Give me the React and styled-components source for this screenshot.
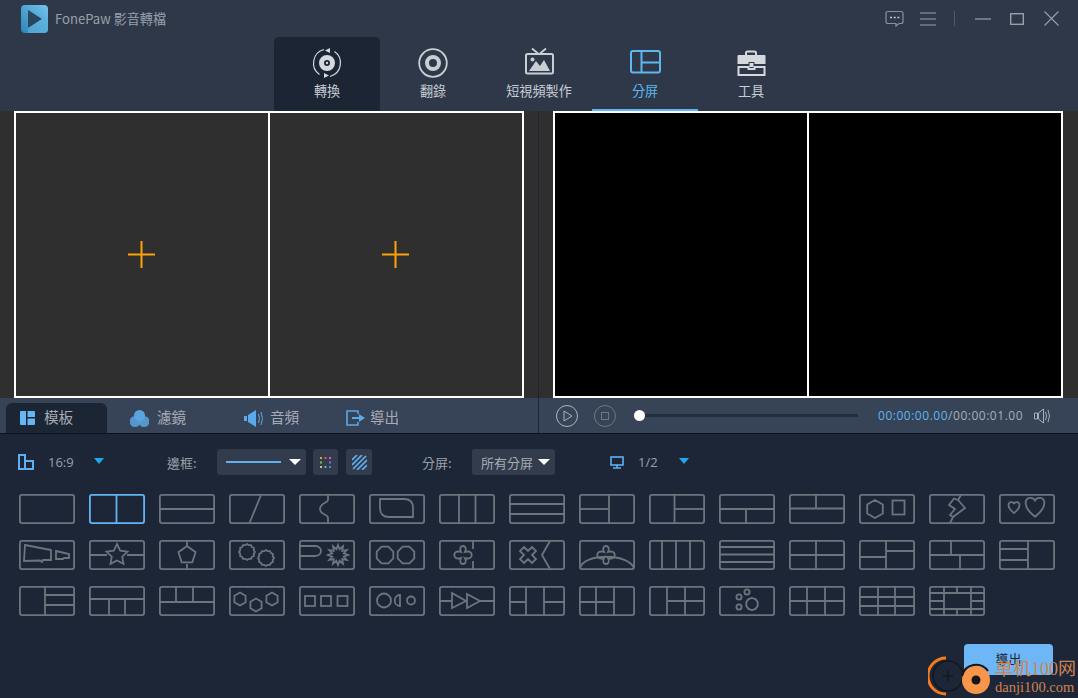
import React from 'react';
import styled, { createGlobalStyle } from 'styled-components';

const CJK = '"Noto Sans CJK TC", "Noto Sans", sans-serif';
const Global = createGlobalStyle`
  html, body { margin: 0; padding: 0; background: #1d2636; overflow: hidden; }
  * { box-sizing: border-box; }
`;

const Shell = styled.div`
  position: relative; width: 1078px; height: 698px; overflow: hidden;
  display: flex; flex-direction: column; background: #1d2636; font-family: ${CJK};
`;
const Head = styled.header`background: #2e3849; height: 111px; display: flex; flex-direction: column;`;
const TitleBar = styled.div`height: 37px; display: flex; align-items: center; padding-left: 21px;`;
const AppName = styled.span`margin-left: 7px; font-size: 13.1px; color: #98a0ab; flex: 1; line-height: 37px; margin-top: -1px;`;
const WinControls = styled.div`display: flex; align-items: center; height: 37px; padding-right: 19px; gap: 0;`;
const WinIcon = styled.svg`display: block; margin-left: ${p => p.$gap}px;`;
const Nav = styled.nav`height: 74px; display: flex; padding-left: 274px;`;
const NavTab = styled.div`
  position: relative; width: 106px; height: 74px; display: flex; flex-direction: column; align-items: center;
  padding-top: 9px; border-radius: 5px 5px 0 0;
  background: ${p => p.$dark ? '#1b2534' : 'transparent'};
  color: ${p => p.$blue ? '#5cb8ef' : '#c9ced5'};
  border-bottom: ${p => p.$blue ? '2px solid #5cb8ef' : '0'};
`;
const NavIcon = styled.svg`display: block; width: 34px; height: 34px;`;
const NavLabel = styled.span`font-size: 13.1px; line-height: 18px; margin-top: 2px; white-space: nowrap;`;

const PreviewRow = styled.section`display: flex; height: 287px;`;
const Pane = styled.div`width: ${p => p.$w}; flex: ${p => p.$w ? 'none' : 1}; padding-left: 14px; background: #2f2f2f;`;
const Rule = styled.div`width: 1px; background: #1d2433;`;
const Frame = styled.div`
  width: 510px; height: 287px; display: grid; grid-template-columns: 252px 252px; gap: 2px;
  border: 2px solid #fff; background: #fff;
`;
const Cell = styled.div`background: ${p => p.$black ? '#000' : '#2f2f2f'}; display: flex; align-items: center; justify-content: center;`;
const PlusIcon = styled.svg`display: block; margin-right: 1px; fill: none; stroke: #ffa20a; stroke-width: 2;`;

const BarRow = styled.section`display: flex; height: 36px; background: #374357; border-bottom: 1px solid #0e121a;`;
const TabsBar = styled.div`width: 538px; display: flex; padding: 5px 0 0 6px;`;
const Tab = styled.div`
  width: ${p => p.$w}px; height: 30px; display: flex; align-items: center; padding-left: ${p => p.$pad}px;
  border-radius: 6px 6px 0 0; background: ${p => p.$dark ? '#1b2534' : 'transparent'};
`;
const TabLabel = styled.span`font-size: 14.6px; line-height: 20px; margin-top: -2px; color: #a5abb5; margin-left: ${p => p.$gap}px;`;
const Player = styled.div`flex: 1; display: flex; align-items: center; padding-left: 17px;`;
const Track = styled.div`position: relative; width: 219px; height: 3px; background: #252e3c; margin-left: 23px;`;
const Knob = styled.div`position: absolute; left: -5px; top: -4px; width: 11px; height: 11px; border-radius: 50%; background: #fff;`;
const Time = styled.div`margin-left: 20px; font: 12px "Open Sans", sans-serif; letter-spacing: 0.52px; color: #a8aeb8; white-space: nowrap; width: 156px;`;
const TimeNow = styled.span`color: #5db6ee;`;

const Lower = styled.section`flex: 1; display: flex; flex-direction: column;`;
const Tools = styled.div`display: flex; align-items: center; height: 26px; margin-top: 15px; padding-left: 18px; color: #9aa0aa; font-size: 13px;`;
const ToolGroup = styled.div`width: ${p => p.$w}px; display: flex; align-items: center; flex: none;`;
const ToolText = styled.span`width: ${p => p.$w}px; flex: none; white-space: nowrap; font-family: ${p => p.$latin ? '"Open Sans", sans-serif' : 'inherit'};`;
const Arrow = styled.i`
  display: block; width: 0; height: 0; flex: none; margin-top: -3px;
  border-left: 5.5px solid transparent; border-right: 5.5px solid transparent; border-top: 6px solid #1fa8ee;
`;
const Dropdown = styled.div`
  width: ${p => p.$w}px; height: 26px; flex: none; background: #333c4c; border-radius: 3px;
  display: flex; align-items: center; justify-content: space-between; padding: 0 5px 0 ${p => p.$pad}px;
`;
const WhiteArrow = styled.i`
  display: block; width: 0; height: 0;
  border-left: 6px solid transparent; border-right: 6px solid transparent; border-top: 6px solid #fff;
`;
const Line = styled.div`width: 55px; height: 2px; background: #63b0f0;`;
const DropLabel = styled.span`color: #a5abb5; font-size: 13px;`;
const SquareBtn = styled.div`
  width: ${p => p.$w}px; height: 26px; flex: none; background: #333c4c; border-radius: 3px; margin-left: ${p => p.$gap}px;
  display: flex; align-items: center; justify-content: center;
`;
const Grid = styled.div`
  display: grid; grid-template-columns: repeat(15, 56px); grid-auto-rows: 30px; column-gap: 14px; row-gap: 16px;
  margin-top: 19px; padding-left: 19px;
`;
const Thumb = styled.svg`display: block; width: 56px; height: 30px; fill: none; stroke: ${p => p.$on ? '#63b4f5' : '#6e747e'}; stroke-width: 1.8;`;
const Footer = styled.div`display: flex; justify-content: flex-end; padding-right: 25px; margin-top: 28px;`;
const ExportBtn = styled.div`
  width: 89px; height: 31px; border-radius: 4px; background: #6db7f6; color: #1d2636; font-size: 13px; padding-bottom: 2px;
  display: flex; align-items: center; justify-content: center;
`;
const Watermark = styled.div`position: absolute; left: 928px; top: 654px; width: 150px; height: 44px; pointer-events: none;`;
const WmLogo = styled.svg`position: absolute; left: 0; top: 0; display: block;`;
const WmCn = styled.span`
  position: absolute; left: 67px; top: 3px; font: 18px "Liberation Serif", "Noto Sans CJK SC", serif; color: #cf8350; white-space: nowrap; line-height: 24px;
`;
const WmEn = styled.span`
  position: absolute; left: 67px; top: 24px; font: 14.5px "Liberation Serif", serif; color: #cf8350; white-space: nowrap; line-height: 18px;
`;

const poly = (cx, cy, r, n, rot = -90, r2) => {
  const pts = [];
  const count = r2 ? n * 2 : n;
  for (let i = 0; i < count; i++) {
    const a = ((rot + (360 / count) * i) * Math.PI) / 180;
    const rad = r2 && i % 2 ? r2 : r;
    pts.push(`${(cx + rad * Math.cos(a)).toFixed(1)},${(cy + rad * Math.sin(a)).toFixed(1)}`);
  }
  return pts.join(' ');
};
const P = ({ d }) => <path d={d} />;
const V = x => `M${x} 1V29`;
const H = y => `M1 ${y}H55`;
const heart = (x, y, s) => `M${x} ${y + 6 * s}C${x - 9 * s} ${y - 1 * s} ${x - 7 * s} ${y - 7 * s} ${x - 3.5 * s} ${y - 7 * s}C${x - 1.5 * s} ${y - 7 * s} ${x} ${y - 6 * s} ${x} ${y - 4.5 * s}C${x} ${y - 6 * s} ${x + 1.5 * s} ${y - 7 * s} ${x + 3.5 * s} ${y - 7 * s}C${x + 7 * s} ${y - 7 * s} ${x + 9 * s} ${y - 1 * s} ${x} ${y + 6 * s}Z`;
const clover = (x, y) => `M${x - 2} ${y - 3}C${x - 6} ${y - 11} ${x + 6} ${y - 11} ${x + 2} ${y - 3}C${x + 11} ${y - 6} ${x + 11} ${y + 6} ${x + 2} ${y + 3}C${x + 6} ${y + 11} ${x - 6} ${y + 11} ${x - 2} ${y + 3}C${x - 11} ${y + 6} ${x - 11} ${y - 6} ${x - 2} ${y - 3}Z`;
const cross = (x, y) => `M${x - 4} ${y - 8}L${x} ${y - 4}L${x + 4} ${y - 8}L${x + 8} ${y - 4}L${x + 4} ${y}L${x + 8} ${y + 4}L${x + 4} ${y + 8}L${x} ${y + 4}L${x - 4} ${y + 8}L${x - 8} ${y + 4}L${x - 4} ${y}L${x - 8} ${y - 4}Z`;

const layouts = [
  [],
  [V(27.5)],
  [H(15)],
  ['M32 1L20.5 29'],
  ['M29 1V6C29 9 21 9 21 15C21 21 29 20 29 24V29'],
  ['M11 5H35Q44 5 44 14V23H20Q11 23 11 14Z'],
  [V(20), V(36.5)],
  [H(10), H(20)],
  [V(30), 'M1 15H30'],
  [V(25.5), 'M26 15H55'],
  [H(15), 'M27 15V29'],
  [H(14.5), 'M27 1V14'],
  [<polygon key="a" points={poly(16, 15, 9, 6)} />, <rect key="b" x="33.5" y="6.5" width="12" height="14" />],
  ['M32 1L29 6L25 4.5L20 11L26 15L21 21L24 23L21 29M29 6L36 14L24 23'],
  [heart(15, 14, 0.85), heart(36, 14, 1.45)],

  [<polygon key="a" points="6,5 32,10 32,20 24,20 23,22 21,20.5 5,21" />, <polygon key="b" points="37,11 50,14 50,18 45,18 44,19 37,19" />],
  ['M1 15H18M38 15H55', <polygon key="a" points={poly(28, 15, 11, 5, -90, 5.5)} />],
  ['M28 1V6M28 24V29', <polygon key="a" points={poly(28, 15, 9, 5)} />],
  [<polygon key="a" points={poly(18, 12, 8, 12, -90, 7)} />, <polygon key="b" points={poly(37, 18, 8, 12, -90, 7)} />],
  ['M1 6H16C24 6 24 16 16 16H1', <polygon key="a" points={poly(39, 15, 10, 12, -90, 6)} />],
  [<polygon key="a" points={poly(16, 15, 9, 8, -67.5)} />, <polygon key="b" points={poly(37, 15, 9, 8, -67.5)} />],
  ['M34 1V9M34 21V29', clover(24, 15)],
  [cross(19, 15), 'M41 1L33 15L41 29'],
  ['M1 28C5 13 49 13 55 28', clover(27, 15)],
  [V(13), V(27), V(41)],
  [H(7), H(14.5), H(22)],
  [V(27), H(15)],
  [V(27), 'M1 17H27M27 11H55'],
  [H(15), 'M22 1V15M31 15V29'],
  [V(29), 'M1 9H29M1 20H29'],

  [V(26), 'M26 9H55M26 19H55'],
  [H(13), 'M20 13V29M36 13V29'],
  [H(16), 'M17 1V16M34 1V16'],
  [<polygon key="a" points={poly(11, 13, 6.5, 6)} />, <polygon key="b" points={poly(27, 19, 6.5, 6)} />, <polygon key="c" points={poly(43, 13, 6.5, 6)} />],
  [<rect key="a" x="6" y="10" width="10" height="10" />, <rect key="b" x="22" y="10" width="10" height="10" />, <rect key="c" x="38.5" y="10" width="10" height="10" />],
  [<circle key="a" cx="15" cy="14.5" r="7" />, 'M31 9V20C24 20 24 9 31 9Z', <circle key="c" cx="42" cy="14.5" r="4" />],
  ['M1 15H13M41 15H55', <polygon key="a" points="13,7 27,15 13,22" />, <polygon key="b" points="28,8 41,15 28,22" />],
  [V(17), V(35), 'M1 16H17M35 16H55'],
  [V(17), V(35), 'M1 16H35'],
  [V(18), V(36), 'M18 15H55'],
  [<circle key="a" cx="28" cy="6" r="2.6" />, <circle key="b" cx="20" cy="11" r="2.6" />, <circle key="c" cx="20" cy="21" r="2.6" />, <polygon key="d" points={poly(33, 18, 6, 10)} />],
  [V(18), V(36), H(15)],
  [V(19), V(36), H(11), H(20)],
  ['M1 7H55M1 23H55M15 1V29M42 1V29M28 1V7M28 23V29M1 15H15M42 15H55'],
];

const NavIcons = {
  convert: (
    <NavIcon viewBox="0 0 34 34" fill="none">
      <path d="M14 3.5A14 14 0 0 0 9.5 28.5M20 30.5A14 14 0 0 0 24.5 5.5" stroke="#d5d8dd" strokeWidth="1.2" />
      <path d="M20 2L15 4.5L20 7ZM14 32L19 29.5L14 27Z" fill="#d5d8dd" />
      <circle cx="17" cy="17" r="5.5" stroke="#d5d8dd" strokeWidth="5" />
      <circle cx="17" cy="17" r="1.2" fill="#d5d8dd" />
    </NavIcon>
  ),
  record: (
    <NavIcon viewBox="0 0 34 34" fill="none">
      <circle cx="17" cy="17" r="13.8" stroke="#c9ced5" strokeWidth="1.8" />
      <circle cx="17" cy="17" r="6" stroke="#c9ced5" strokeWidth="4" />
    </NavIcon>
  ),
  tv: (
    <NavIcon viewBox="0 0 34 34" fill="none">
      <path d="M10 2.5L16 7.5M24 2.5L18 7.5" stroke="#c9ced5" strokeWidth="1.8" />
      <rect x="4" y="8" width="27" height="19.5" rx="1.5" stroke="#c9ced5" strokeWidth="2" />
      <circle cx="10.5" cy="13.5" r="2" fill="#c9ced5" />
      <path d="M7 25L14 15L18 20L22 14L28 25Z" fill="#c9ced5" />
    </NavIcon>
  ),
  split: (
    <NavIcon viewBox="0 0 34 34" fill="none" stroke="#5cb8ef" strokeWidth="2">
      <rect x="3" y="5" width="29" height="21.5" rx="2" />
      <path d="M13.5 5V26.5M13.5 16.5H32" />
    </NavIcon>
  ),
  tools: (
    <NavIcon viewBox="0 0 34 34" fill="none">
      <path d="M12 10V7Q12 5.5 13.5 5.5H20.5Q22 5.5 22 7V10" stroke="#d5d8dd" strokeWidth="2" />
      <path d="M3.5 10Q3.5 9 4.5 9H30.5Q31.5 9 31.5 10V18H20.5V16H14.5V18H3.5Z" fill="#d5d8dd" />
      <path d="M4.5 21H14.5V23H20.5V21H30.5V29H4.5Z" stroke="#d5d8dd" strokeWidth="2" />
      <rect x="15.5" y="17" width="4" height="4" fill="#d5d8dd" />
    </NavIcon>
  ),
};

const Plus = () => (
  <PlusIcon width="27" height="27" viewBox="0 0 27 27">
    <path d="M13.5 0V27M0 13.5H27" />
  </PlusIcon>
);

export default function App() {
  return (
    <Shell>
      <Global />
      <Head>
        <TitleBar>
          <svg width="27" height="28" viewBox="0 0 27 28">
            <defs>
              <linearGradient id="lg" x1="0" y1="1" x2="1" y2="0">
                <stop offset="0" stopColor="#2d84b8" />
                <stop offset="1" stopColor="#74c5ee" />
              </linearGradient>
            </defs>
            <rect width="27" height="28" rx="4" fill="url(#lg)" />
            <path d="M7 5L21 14L7 23Z" fill="#29465f" />
            <path d="M7 23L21 14H27V24Q27 28 23 28H7Z" fill="#5fb2de" opacity=".6" />
          </svg>
          <AppName>FonePaw 影音轉檔</AppName>
          <WinControls>
            <WinIcon $gap={0} width="19" height="18" viewBox="0 0 19 18" fill="none" stroke="#8a919c" strokeWidth="1.2">
              <path d="M3 1.5H16Q18 1.5 18 3.5V11.5Q18 13.5 16 13.5H14L11 16V13.5H3Q1 13.5 1 11.5V3.5Q1 1.5 3 1.5Z" />
              <path d="M5 7.5H7M8.7 7.5H10.7M12.4 7.5H14.4" stroke="#c4c9d0" strokeWidth="1.6" />
            </WinIcon>
            <WinIcon $gap={16} width="16" height="14" viewBox="0 0 16 14" stroke="#98a0ab" strokeWidth="1.2">
              <path d="M0 1H16M0 7H16M0 13H16" />
            </WinIcon>
            <WinIcon $gap={18} width="1" height="15" viewBox="0 0 1 15" stroke="#4f5969">
              <path d="M.5 0V15" />
            </WinIcon>
            <WinIcon $gap={20} width="16" height="2" viewBox="0 0 16 2" stroke="#98a0ab" strokeWidth="1.2">
              <path d="M0 1H16" />
            </WinIcon>
            <WinIcon $gap={19} width="14" height="12" viewBox="0 0 14 12" fill="none" stroke="#98a0ab" strokeWidth="1.4">
              <rect x=".7" y=".7" width="12.6" height="10.6" />
            </WinIcon>
            <WinIcon $gap={20} width="15" height="15" viewBox="0 0 15 15" stroke="#98a0ab" strokeWidth="1.1">
              <path d="M.5.5L14.5 14.5M14.5.5L.5 14.5" />
            </WinIcon>
          </WinControls>
        </TitleBar>
        <Nav>
          <NavTab $dark>{NavIcons.convert}<NavLabel>轉換</NavLabel></NavTab>
          <NavTab>{NavIcons.record}<NavLabel>翻錄</NavLabel></NavTab>
          <NavTab>{NavIcons.tv}<NavLabel>短視頻製作</NavLabel></NavTab>
          <NavTab $blue>{NavIcons.split}<NavLabel>分屏</NavLabel></NavTab>
          <NavTab>{NavIcons.tools}<NavLabel>工具</NavLabel></NavTab>
        </Nav>
      </Head>

      <PreviewRow>
        <Pane $w="538px">
          <Frame>
            <Cell><Plus /></Cell>
            <Cell><Plus /></Cell>
          </Frame>
        </Pane>
        <Rule />
        <Pane>
          <Frame>
            <Cell $black />
            <Cell $black />
          </Frame>
        </Pane>
      </PreviewRow>

      <BarRow>
        <TabsBar>
          <Tab $w={101} $dark $pad={14}>
            <svg width="15" height="14" viewBox="0 0 15 14" fill="#66b6f5">
              <path d="M0 1Q0 0 1 0H6V14H1Q0 14 0 13ZM7.5 0H14Q15 0 15 1V6H7.5ZM7.5 7.5H15V13Q15 14 14 14H7.5Z" />
            </svg>
            <TabLabel $gap={9}>模板</TabLabel>
          </Tab>
          <Tab $w={114} $pad={23}>
            <svg width="19" height="17" viewBox="0 0 19 17" fill="#5aa5e0">
              <circle cx="9.5" cy="5.5" r="5.5" />
              <circle cx="5" cy="11.5" r="5.5" opacity=".85" />
              <circle cx="14" cy="11.5" r="5.5" opacity=".85" />
            </svg>
            <TabLabel $gap={8}>濾鏡</TabLabel>
          </Tab>
          <Tab $w={113} $pad={23}>
            <svg width="20" height="17" viewBox="0 0 20 17" fill="none">
              <path d="M0 6H3V11H0ZM4 5L12 0V17L4 12Z" fill="#5aa9ea" />
              <path d="M14.5 4Q16.5 8.5 14.5 13M17 2Q20 8.5 17 15" stroke="#5aa9ea" strokeWidth="1" />
            </svg>
            <TabLabel $gap={6}>音頻</TabLabel>
          </Tab>
          <Tab $w={110} $pad={12}>
            <svg width="19" height="16" viewBox="0 0 19 16" fill="none">
              <path d="M12 4V1H1V15H12V12" stroke="#5aa9ea" strokeWidth="1.6" />
              <path d="M6 7H13V4L19 8L13 12V9H6Z" fill="#5aa9ea" />
            </svg>
            <TabLabel $gap={5}>導出</TabLabel>
          </Tab>
        </TabsBar>
        <Rule />
        <Player>
          <svg width="22" height="22" viewBox="0 0 22 22" fill="none" stroke="#aeb4bd" strokeWidth="1">
            <circle cx="11" cy="11" r="10.5" />
            <path d="M8 6L16 11L8 16Z" />
          </svg>
          <svg width="22" height="22" viewBox="0 0 22 22" fill="none" stroke="#6f7783" strokeWidth="1" style={{ marginLeft: 16 }}>
            <circle cx="11" cy="11" r="10.5" />
            <rect x="7.5" y="7.5" width="7" height="7" />
          </svg>
          <Track><Knob /></Track>
          <Time><TimeNow>00:00:00.00</TimeNow>/00:00:01.00</Time>
          <svg width="18" height="16" viewBox="0 0 18 16" fill="none" stroke="#a8aeb8" strokeWidth="1">
            <path d="M.5 5H3.5V11H.5ZM4.5 5L9.5 1V15L4.5 11ZM11.5 4Q13.5 8 11.5 12M14 2Q17 8 14 14" />
          </svg>
        </Player>
      </BarRow>

      <Lower>
        <Tools>
          <ToolGroup $w={149}>
            <svg width="16" height="16" viewBox="0 0 16 16" fill="none" stroke="#5fb0f2" strokeWidth="2" style={{ marginRight: 14 }}>
              <path d="M1 1H7V15H1ZM7 7H15V15H7Z" />
            </svg>
            <ToolText $w={46} $latin>16:9</ToolText>
            <Arrow />
          </ToolGroup>
          <ToolGroup $w={255}>
            <ToolText $w={50}>邊框:</ToolText>
            <Dropdown $w={89} $pad={9}><Line /><WhiteArrow /></Dropdown>
            <SquareBtn $w={25} $gap={7}>
              <svg width="11" height="11" viewBox="0 0 11 11">
                <rect x="0" y="0" width="2" height="2" fill="#d9a441" />
                <rect x="4.5" y="0" width="2" height="2" fill="#d65b5b" />
                <rect x="9" y="0" width="2" height="2" fill="#c85fb0" />
                <rect x="0" y="4.5" width="2" height="2" fill="#7cc06a" />
                <rect x="9" y="4.5" width="2" height="2" fill="#7a6fd0" />
                <rect x="0" y="9" width="2" height="2" fill="#d2c653" />
                <rect x="4.5" y="9" width="2" height="2" fill="#59b8c8" />
                <rect x="9" y="9" width="2" height="2" fill="#5b7fd6" />
              </svg>
            </SquareBtn>
            <SquareBtn $w={26} $gap={8}>
              <svg width="15" height="15" viewBox="0 0 15 15" stroke="#5fb0f2" strokeWidth="1.7">
                <path d="M0 5L5 0M0 10L10 0M1 14L14 1M5 15L15 5M10 15L15 10" />
              </svg>
            </SquareBtn>
          </ToolGroup>
          <ToolGroup $w={188}>
            <ToolText $w={50}>分屏:</ToolText>
            <Dropdown $w={83} $pad={9}><DropLabel>所有分屏</DropLabel><WhiteArrow /></Dropdown>
          </ToolGroup>
          <ToolGroup $w={100}>
            <svg width="14" height="13" viewBox="0 0 14 13" fill="none" stroke="#5fb0f2" strokeWidth="1.6" style={{ marginRight: 14 }}>
              <rect x="1" y="1" width="12" height="8" />
              <path d="M7 9V12M3 12H11" />
            </svg>
            <ToolText $w={41} $latin>1/2</ToolText>
            <Arrow />
          </ToolGroup>
        </Tools>
        <Grid>
          {layouts.map((items, i) => (
            <Thumb key={i} $on={i === 1} viewBox="0 0 56 30">
              <rect x="0.9" y="0.9" width="54.2" height="28.2" rx="2" />
              {items.map((it, j) => (typeof it === 'string' ? <P key={j} d={it} /> : it))}
            </Thumb>
          ))}
        </Grid>
        <Footer><ExportBtn>導出</ExportBtn></Footer>
      </Lower>

      <Watermark>
        <WmLogo width="66" height="44" viewBox="0 0 66 44" fill="none">
          <path d="M18 4A18 18 0 0 0 18 40" stroke="#f47b20" strokeWidth="3" />
          <circle cx="20" cy="22" r="15" stroke="#15171c" strokeWidth="1.5" />
          <path d="M15 22H25M20 17V27" stroke="#15171c" strokeWidth="1.5" />
          <circle cx="48" cy="26" r="14" fill="#f7954a" />
          <circle cx="48" cy="26" r="4.5" fill="#15171c" />
          <path d="M34 22A14.5 14.5 0 0 1 60 17" stroke="#15171c" strokeWidth="2" />
        </WmLogo>
        <WmCn>单机100网</WmCn>
        <WmEn>danji100.com</WmEn>
      </Watermark>
    </Shell>
  );
}
